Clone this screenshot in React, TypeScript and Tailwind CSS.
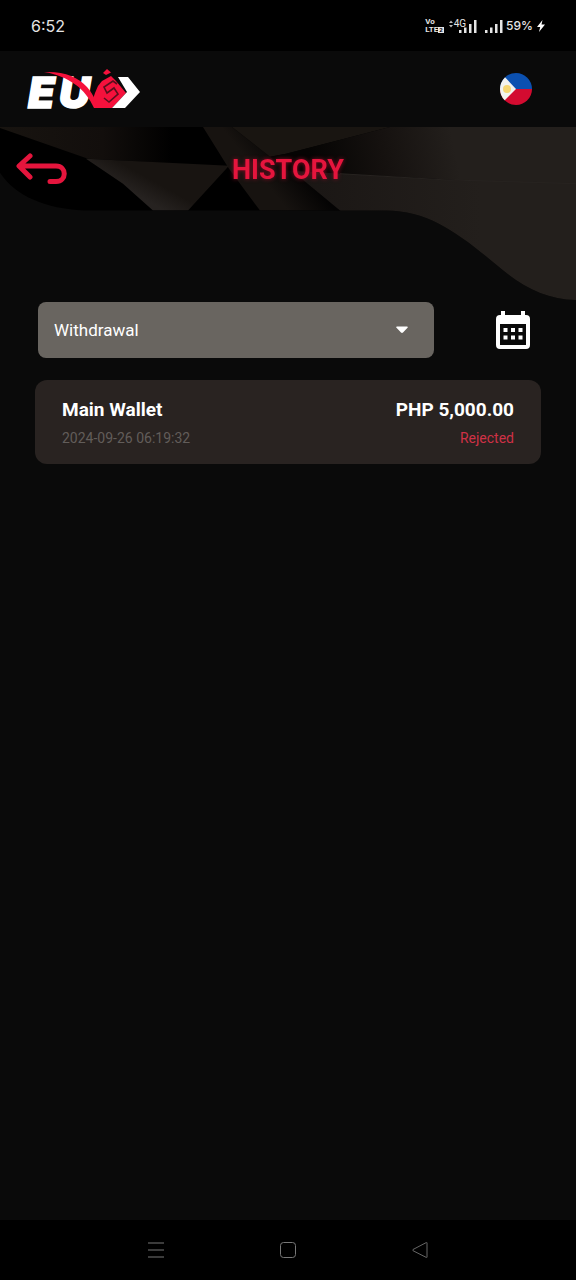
import { useState } from 'react';

interface Transaction {
  wallet: string;
  amount: string;
  date: string;
  status: string;
}

const TRANSACTIONS: Transaction[] = [
  { wallet: 'Main Wallet', amount: 'PHP 5,000.00', date: '2024-09-26 06:19:32', status: 'Rejected' },
];

function SignalBars() {
  return (
    <svg className="w-5 h-4" viewBox="0 0 20 16" fill="#e5e5e5" aria-hidden="true">
      <rect x="1" y="12" width="2.5" height="3" />
      <rect x="6" y="9.5" width="2.5" height="5.5" />
      <rect x="11" y="6" width="2.5" height="9" />
      <rect x="16" y="2" width="2.5" height="13" />
    </svg>
  );
}

function StatusBar() {
  return (
    <div className="h-[51px] shrink-0 bg-black flex items-center justify-between px-[31px] text-[#e5e5e5]">
      <span className="font-['Inter'] text-base">6:52</span>
      <div className="flex items-center">
        <div className="flex flex-col font-bold text-[8px] leading-[8px]">
          <span>Vo</span>
          <span className="flex items-center">
            LTE
            <span className="bg-[#e5e5e5] text-black text-[6px] leading-[6px] px-px">2</span>
          </span>
        </div>
        <svg className="w-1.5 h-2 ml-1 mb-1" viewBox="0 0 6 8" fill="#bdbdbd" aria-hidden="true">
          <path d="M1 3l2-2.500 2 2.500zM1 5l2 2.500 2-2.500z" />
        </svg>
        <span className="text-[10px] leading-[10px] mb-1">4G</span>
        <div className="-ml-2 flex gap-1.5">
          <SignalBars />
          <SignalBars />
        </div>
        <span className="font-['Inter'] font-medium text-[12px] leading-4 ml-0.5">59%</span>
        <svg className="w-2 h-3 ml-1" viewBox="0 0 8 12" fill="#fff" aria-hidden="true">
          <path d="M5.500 0L0 7h3.200L2 12l6-7.500H4.500z" />
        </svg>
      </div>
    </div>
  );
}

function Logo() {
  return (
    <svg className="w-[114px] h-14 overflow-visible" viewBox="0 -4 114 56" role="img" aria-label="EUS">
      <text
        x="0 31"
        y="43"
        fill="#fff"
        stroke="#fff"
        strokeWidth="1.500"
        fontFamily="Inter"
        fontWeight="900"
        fontStyle="italic"
        fontSize="43"
      >
        EU
      </text>
      {/* Emblem */}
      <path d="M67 22l5-9 9-5 21 19-17 19H66z" fill="#0a0a0a" />
      <path d="M67 28l3-7 4-5 9-5 5 5 10 12-14 15H68l-4-6z" fill="#f5113c" />
      <path d="M75 8l4-4 4 3.500-5 2.500z" fill="#f5113c" />
      <path d="M89 19l-4-3-9 6 3 6 7-5 4 6-9 8-5-4" fill="none" stroke="#5a0f1d" strokeWidth="1.600" />
      {/* Swoosh */}
      <path d="M16 7C36 6 50 12 59 22c5 6 9 12 10 21h-3C62 34 55 25 48 20 38 13 29 9 16 7z" fill="#f5113c" />
      {/* Chevron */}
      <path d="M90 12h10l12 15-15 16H84l15-16z" fill="#fff" />
    </svg>
  );
}

function FlagButton() {
  return (
    <button type="button" aria-label="Change country" className="w-8 h-8 rounded-full overflow-hidden">
      <svg className="w-8 h-8" viewBox="0 0 32 32" aria-hidden="true">
        <path d="M0 0h32v16H0z" fill="#0b50b0" />
        <path d="M0 16h32v16H0z" fill="#d30b30" />
        <path d="M0 0h1l15 16L3 29l-3 3z" fill="#f2f2f0" />
        <circle cx="7" cy="16" r="4" fill="#f6d673" />
      </svg>
    </button>
  );
}

function HeroBackground() {
  return (
    <svg
      className="absolute inset-0 w-full h-full"
      viewBox="0 0 576 174"
      preserveAspectRatio="none"
      aria-hidden="true"
    >
      <defs>
        <clipPath id="wave">
          <path d="M0 0h576v174c-28-1-50-11-73-30C463 111 432 84 386 84H84C46 82 16 70 0 46z" />
        </clipPath>
        <linearGradient id="fadeLeft">
          <stop offset="0" stopColor="#181410" />
          <stop offset="0.450" stopColor="#120e0c" />
          <stop offset="0.750" stopColor="#000" />
        </linearGradient>
        <linearGradient id="fadeRight" gradientUnits="userSpaceOnUse" x1="310" y1="30" x2="450" y2="0">
          <stop offset="0" stopColor="#050403" />
          <stop offset="0.500" stopColor="#15110f" />
          <stop offset="1" stopColor="#231f1c" />
        </linearGradient>
        <linearGradient id="lower" gradientUnits="userSpaceOnUse" x1="295" y1="0" x2="480" y2="0">
          <stop offset="0" stopColor="#1a1614" />
          <stop offset="1" stopColor="#231f1c" />
        </linearGradient>
        <linearGradient id="middle" gradientUnits="userSpaceOnUse" x1="283" y1="78" x2="312" y2="55">
          <stop offset="0" stopColor="#171310" />
          <stop offset="1" stopColor="#040303" />
        </linearGradient>
        <linearGradient id="shine" gradientUnits="userSpaceOnUse" x1="150" y1="76" x2="160" y2="58">
          <stop offset="0" stopColor="#262220" />
          <stop offset="1" stopColor="#181411" />
        </linearGradient>
      </defs>
      <g clipPath="url(#wave)">
        <path d="M0 0h576v174H0z" fill="#000" />
        <path d="M0 1V0h203l26 39L88 32z" fill="url(#fadeLeft)" />
        <path d="M86 32l143 7-41 45h-35l-30-27z" fill="url(#shine)" />
        <path d="M203 0h29l38 30 30 18 40 36h-80l-31-42z" fill="url(#middle)" />
        <path d="M232 0h158L286 27l-16 3z" fill="#191511" />
        <path d="M390 0h186v60L288 44l-18-14 16-3z" fill="url(#fadeRight)" />
        <path d="M292 44l150 9 134 4v117H440L340 84z" fill="url(#lower)" />
        <path d="M340 47l102 6 134 4" stroke="#272320" fill="none" />
      </g>
    </svg>
  );
}

function Hero() {
  return (
    <section className="relative h-[173px] shrink-0">
      <HeroBackground />
      <div className="relative h-[84px] flex items-center justify-center px-4">
        <button type="button" aria-label="Back" className="absolute left-4 w-[52px] h-8">
          <svg
            className="w-[52px] h-8"
            viewBox="0 0 52 32"
            fill="none"
            stroke="#e5153d"
            strokeWidth="5"
            strokeLinecap="round"
            strokeLinejoin="round"
            aria-hidden="true"
          >
            <path d="M14 3L3 13l11 11M4 13h36c11 0 11 15.500 0 15.500h-6" />
          </svg>
        </button>
        <h1 className="pt-0.5 text-[27px] leading-8 font-bold text-[#e5153d] drop-shadow-[0_0_2px_#8a0b24]">
          HISTORY
        </h1>
      </div>
    </section>
  );
}

function Filters() {
  const [type, setType] = useState('Withdrawal');

  return (
    <div className="flex items-center justify-between pl-[38px] pr-[46px]">
      <div className="relative w-[396px]">
        <select
          aria-label="Transaction type"
          value={type}
          onChange={(e) => setType(e.target.value)}
          className="block appearance-none w-full h-14 rounded-lg bg-[#696560] text-white text-[17px] pt-0.5 pl-4 pr-12"
        >
          <option>Withdrawal</option>
          <option>Deposit</option>
        </select>
        <svg
          className="absolute right-[26px] top-6 w-3 h-2 pointer-events-none"
          viewBox="0 0 12 8"
          fill="#fff"
          aria-hidden="true"
        >
          <path d="M1 .5h10c1 0 1 .8.500 1.300L7 6.500c-.6.600-1.400.600-2 0L.5 1.800C0 1.300 0 .5 1 .5z" />
        </svg>
      </div>
      <button type="button" aria-label="Pick dates">
        <svg className="w-[34px] h-[38px]" viewBox="0 0 34 38" fill="#fff" aria-hidden="true">
          <path
            fillRule="evenodd"
            d="M5 0h4v4h16V0h4v4h1a4 4 0 014 4v26a4 4 0 01-4 4H4a4 4 0 01-4-4V8a4 4 0 014-4h1zM4 13v21h26V13z"
          />
          <path d="M7.500 17h4v4h-4zM15 17h4v4h-4zM22.500 17h4v4h-4zM7.500 24.500h4v4h-4zM15 24.500h4v4h-4zM22.500 24.500h4v4h-4z" />
        </svg>
      </button>
    </div>
  );
}

function TransactionCard({ wallet, amount, date, status }: Transaction) {
  return (
    <li className="bg-[#292321] rounded-xl px-[27px] pt-4 pb-3.5">
      <div className="flex justify-between text-[19px] leading-7 font-bold text-white">
        <span>{wallet}</span>
        <span>{amount}</span>
      </div>
      <div className="flex justify-between mt-0.5 text-sm leading-6">
        <span className="text-[#625d5a]">{date}</span>
        <span className="text-[#cf3146]">{status}</span>
      </div>
    </li>
  );
}

function NavBar() {
  return (
    <nav className="h-[60px] shrink-0 bg-black flex items-center justify-around px-[90px]">
      <button type="button" aria-label="Recent apps">
        <svg className="w-4 h-4" viewBox="0 0 16 16" fill="none" stroke="#777" aria-hidden="true">
          <path d="M0 1h16M0 8h16M0 15h16" />
        </svg>
      </button>
      <button type="button" aria-label="Home">
        <svg className="w-4 h-4" viewBox="0 0 16 16" fill="none" stroke="#777" aria-hidden="true">
          <rect x=".5" y=".5" width="15" height="15" rx="3" />
        </svg>
      </button>
      <button type="button" aria-label="Back">
        <svg className="w-4 h-4" viewBox="0 0 16 16" fill="none" stroke="#666" strokeLinejoin="round" aria-hidden="true">
          <path d="M15 .8v14.400q0 .5-.8.200L1 8.700q-.8-.7 0-1.200L14.200.6q.8-.3.8.200z" />
        </svg>
      </button>
    </nav>
  );
}

export default function App() {
  return (
    <div className="min-h-screen flex flex-col bg-[#0a0a0a] font-['Roboto',sans-serif]">
      <StatusBar />
      <header className="h-[76px] shrink-0 flex items-center justify-between pl-7 pr-11">
        <Logo />
        <FlagButton />
      </header>
      <Hero />
      <main className="flex-1 pt-0.5">
        <Filters />
        <ul className="mt-[22px] px-[35px] flex flex-col gap-3">
          {TRANSACTIONS.map((t) => (
            <TransactionCard key={t.date} {...t} />
          ))}
        </ul>
      </main>
      <NavBar />
    </div>
  );
}
